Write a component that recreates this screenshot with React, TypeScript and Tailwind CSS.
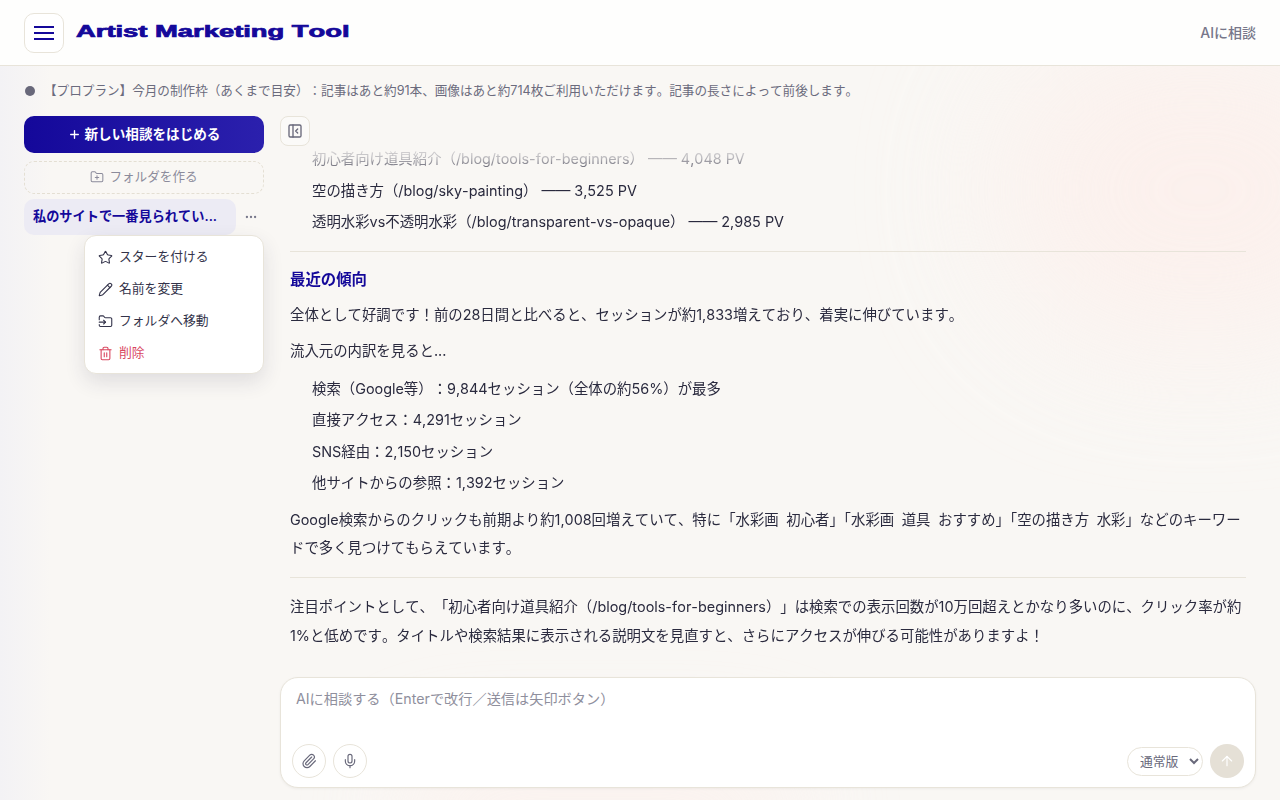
import { PanelLeftClose, Plus, FolderPlus, MoreHorizontal, Star, Pencil, FolderInput, Trash2, Paperclip, Mic, ArrowUp } from "lucide-react";

const sans = "font-['Inter','Noto_Sans_CJK_JP',sans-serif]";

function MenuItem({ icon, label, danger }: { icon: React.ReactNode; label: string; danger?: boolean }) {
  return (
    <div className={`flex h-8 items-center gap-[6px] pl-[13px] pr-3 text-[12.8px] leading-none ${danger ? "text-[#d9475f]" : "text-[#33334a]"}`}>
      {icon}
      <span>{label}</span>
    </div>
  );
}

function Li({ children }: { children: React.ReactNode }) {
  return <div className="pl-[22px] h-[31.6px] flex items-center">{children}</div>;
}

export default function App() {
  return (
    <div className={`${sans} [text-spacing-trim:space-all] [font-kerning:none] relative flex h-screen w-full flex-col overflow-hidden bg-[#f9f7f4] text-[#2a2a3e]`}>
      <div className="pointer-events-none absolute inset-0 bg-[linear-gradient(90deg,#f3f2f5_0%,#f9f7f4_4%,#f9f7f4_100%)]" />
      <div className="pointer-events-none absolute right-[-120px] top-[40px] h-[300px] w-[400px] rounded-full bg-[#fdeeea] opacity-70 blur-[70px]" />
      <div className="pointer-events-none absolute bottom-[-60px] left-[400px] h-[100px] w-[400px] rounded-full bg-[#fdeeea] opacity-60 blur-[50px]" />
      <header className="relative flex h-[66px] shrink-0 items-center justify-between border-b border-[#e8e4da] bg-[#fefefd] pl-6 pr-6">
        <div className="flex items-center gap-3">
          <button className="flex h-10 w-10 items-center justify-center rounded-[10px] border border-[#e8e4da] bg-white">
            <svg width="24" height="24" viewBox="0 0 24 24" fill="none" stroke="#14089a" strokeWidth="2">
              <path d="M2 6h20M2 12h20M2 18h20" />
            </svg>
          </button>
          <span className="origin-left -translate-y-px scale-x-[1.71] font-['Liberation_Sans',sans-serif] text-[16px] font-bold text-[#14089a] [-webkit-text-stroke:0.7px_#14089a]">
            Artist Marketing Tool
          </span>
        </div>
        <span className="text-[14px] font-medium text-[#77778a]">AIに相談</span>
      </header>

      <div className="relative flex h-[50px] shrink-0 items-center gap-2 pl-[25px] text-[12.6px] text-[#6b6b7d]">
        <span className="h-[10px] w-[10px] rounded-full bg-[#68687a]" />
        <span className="ml-[1px]">【プロプラン】今月の制作枠（あくまで目安）：記事はあと約91本、画像はあと約714枚ご利用いただけます。記事の長さによって前後します。</span>
      </div>

      <div className="relative flex min-h-0 flex-1 gap-4 px-6 pb-3">
        <aside className="relative flex w-[240px] shrink-0 flex-col">
          <button className="flex h-[37px] items-center justify-center gap-1 rounded-[10px] bg-[linear-gradient(90deg,#14089a,#2b20ad)] text-[13.6px] font-semibold text-white">
            <Plus size={13} strokeWidth={2.5} />
            新しい相談をはじめる
          </button>
          <button className="mt-2 flex h-[33px] items-center justify-center gap-[5px] rounded-[10px] border border-dashed border-[#e4dfd3] pb-[1px] text-[12.6px] text-[#8b8b9b]">
            <FolderPlus size={14} strokeWidth={1.75} />
            フォルダを作る
          </button>
          <div className="mt-[5px] flex items-center">
            <div className="flex h-[36px] w-[212px] items-center truncate rounded-[10px] bg-[#ecebf4] px-[9px] text-[13.2px] font-semibold text-[#14089a]">
              私のサイトで一番見られてい...
            </div>
            <MoreHorizontal size={14} className="ml-2 text-[#77778a]" />
          </div>
          <div className="absolute left-[60px] top-[119px] w-[180px] rounded-[12px] border border-[#e8e4da] bg-white pb-[4px] pt-[5px] shadow-[0_8px_20px_rgba(40,40,70,0.12)]">
            <MenuItem icon={<Star size={15} strokeWidth={1.75} />} label="スターを付ける" />
            <MenuItem icon={<Pencil size={15} strokeWidth={1.75} />} label="名前を変更" />
            <MenuItem icon={<FolderInput size={15} strokeWidth={1.75} />} label="フォルダへ移動" />
            <MenuItem danger icon={<Trash2 size={15} strokeWidth={1.75} />} label="削除" />
          </div>
        </aside>

        <main className="relative flex min-w-0 flex-1 flex-col">
          <div className="min-h-0 flex-1 overflow-hidden [mask-image:linear-gradient(180deg,transparent_26px,rgba(0,0,0,0.3)_42px,#000_60px)]">
            <div className="px-[10px] pt-[27.6px] text-[14.4px] leading-[28.8px]">
              <Li>初心者向け道具紹介（/blog/tools-for-beginners） —— 4,048 PV</Li>
              <Li>空の描き方（/blog/sky-painting） —— 3,525 PV</Li>
              <Li>透明水彩vs不透明水彩（/blog/transparent-vs-opaque） —— 2,985 PV</Li>
              <hr className="mb-[14px] mt-[12.4px] border-[#e8e4da]" />
              <h3 className="text-[15.4px] font-bold text-[#14089a]">最近の傾向</h3>
              <p className="mt-[6px]">全体として好調です！前の28日間と比べると、セッションが約1,833増えており、着実に伸びています。</p>
              <p className="mb-[7px] mt-[8px]">流入元の内訳を見ると...</p>
              <Li>検索（Google等）：9,844セッション（全体の約56%）が最多</Li>
              <Li>直接アクセス：4,291セッション</Li>
              <Li>SNS経由：2,150セッション</Li>
              <Li>他サイトからの参照：1,392セッション</Li>
              <p className="mt-[6px] [text-spacing-trim:normal] [word-spacing:3.5px]">Google検索からのクリックも前期より約1,008回増えていて、特に「水彩画 初心者」「水彩画 道具 おすすめ」「空の描き方 水彩」などのキーワードで多く見つけてもらえています。</p>
              <hr className="mb-[15px] mt-[14px] border-[#e8e4da]" />
              <p>注目ポイントとして、「初心者向け道具紹介（/blog/tools-for-beginners）」は検索での表示回数が10万回超えとかなり多いのに、クリック率が約1%と低めです。タイトルや検索結果に表示される説明文を見直すと、さらにアクセスが伸びる可能性がありますよ！</p>
            </div>
          </div>
          <button className="absolute left-0 top-0 flex h-[30px] w-[30px] items-center justify-center rounded-[8px] border border-[#e8e4da] bg-[#fbfaf8] text-[#68687a]">
            <PanelLeftClose size={16} strokeWidth={2} />
          </button>
          <div className="mt-[11px] flex h-[111px] shrink-0 flex-col justify-between rounded-[18px] border border-[#e8e4da] bg-white px-[11px] pb-[9px] pt-[10px] shadow-[0_1px_3px_rgba(0,0,0,0.05)]">
            <div className="pl-[4px] text-[14.2px] text-[#8f8f9d]">AIに相談する（Enterで改行／送信は矢印ボタン）</div>
            <div className="flex items-center justify-between">
              <div className="flex gap-[7px]">
                <button className="flex h-[34px] w-[34px] items-center justify-center rounded-full border border-[#e8e4da] text-[#68687a]"><Paperclip size={16} strokeWidth={1.75} /></button>
                <button className="flex h-[34px] w-[34px] items-center justify-center rounded-full border border-[#e8e4da] text-[#68687a]"><Mic size={16} strokeWidth={1.75} /></button>
              </div>
              <div className="flex items-center gap-[7px]">
                <select className="h-[29px] w-[76px] rounded-full border border-[#e8e4da] bg-white pl-[8px] text-[12.8px] text-[#68687a]">
                  <option>通常版</option>
                </select>
                <button className="flex h-[34px] w-[34px] items-center justify-center rounded-full bg-[#e5e0d6] text-white"><ArrowUp size={16} strokeWidth={1.75} /></button>
              </div>
            </div>
          </div>
        </main>
      </div>
    </div>
  );
}
